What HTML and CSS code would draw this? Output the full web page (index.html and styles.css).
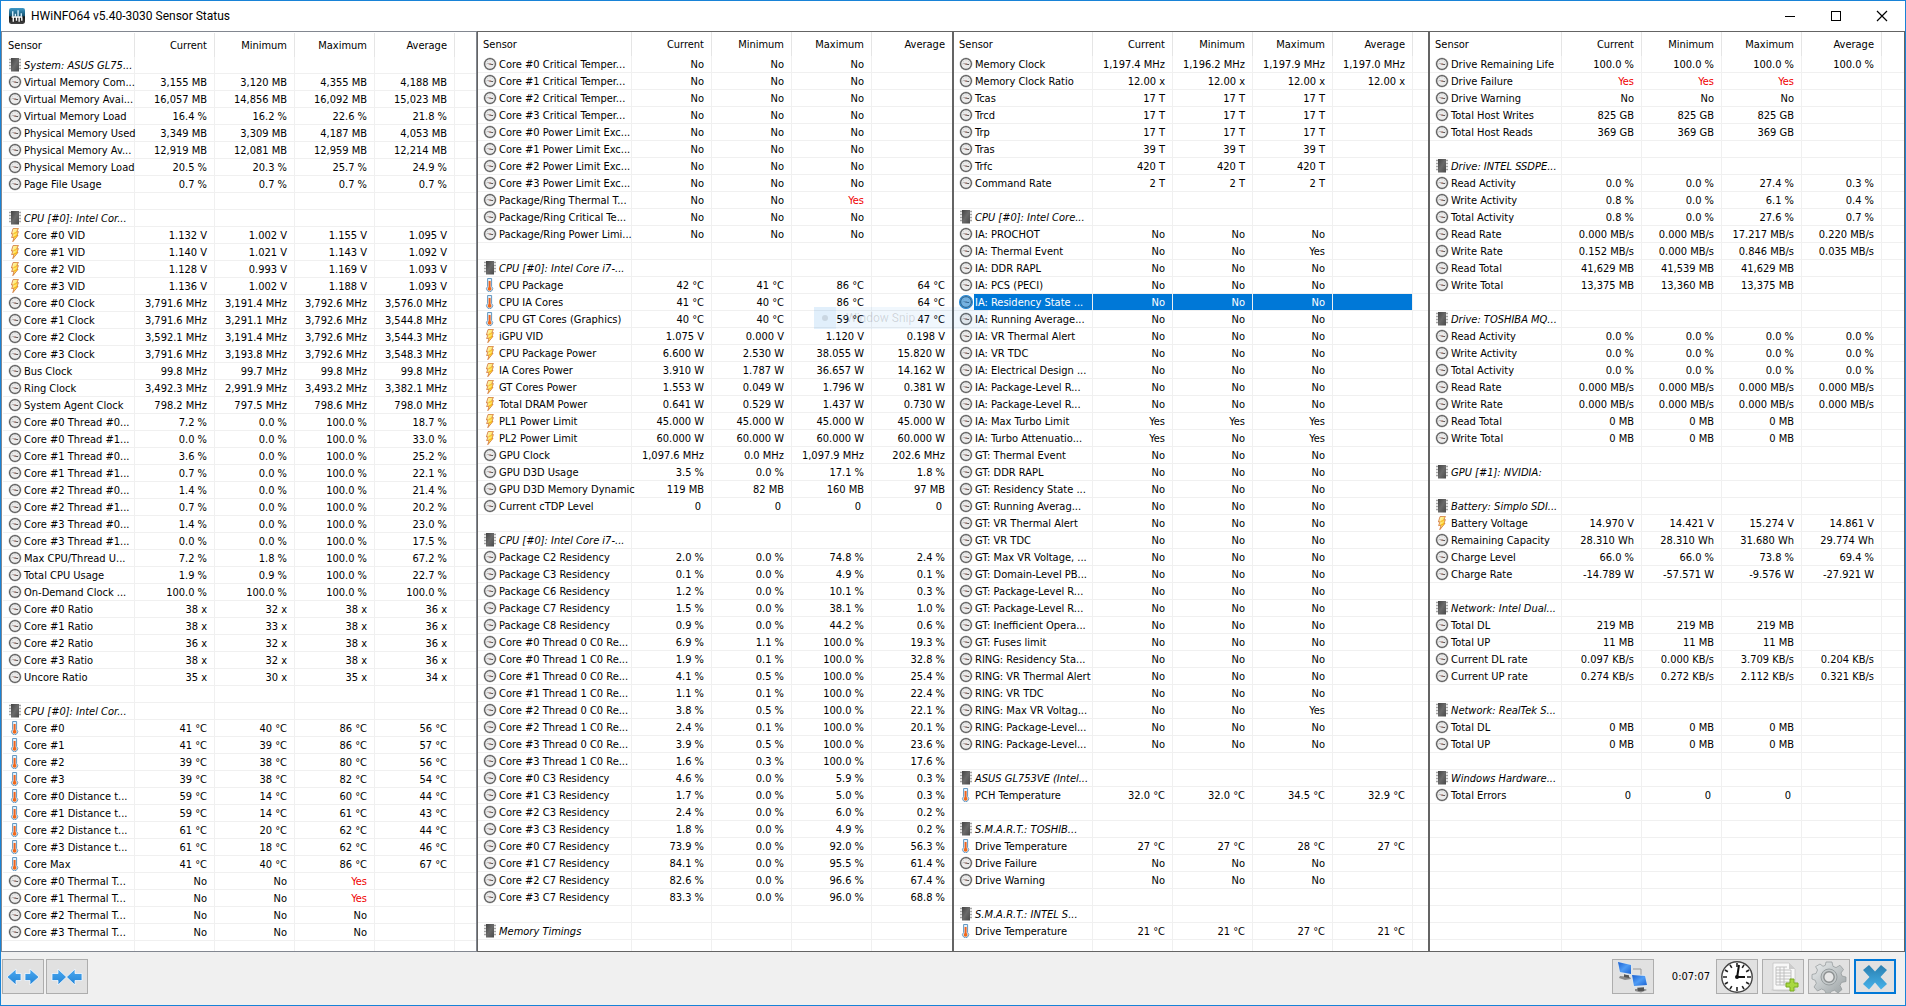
FILE: index.html
```html
<!DOCTYPE html>
<html lang="en">
<head>
<meta charset="utf-8">
<title>HWiNFO64 v5.40-3030 Sensor Status</title>
<link rel="stylesheet" href="styles.css">
</head>
<body>
<svg class="sprite" aria-hidden="true">
  <defs>
    <linearGradient id="chip-fill" x1="0" y1="0" x2="1" y2="1"><stop offset="0" stop-color="#444"/><stop offset=".5" stop-color="#6a6a6a"/><stop offset="1" stop-color="#4a4a4a"/></linearGradient>
    <linearGradient id="bolt-fill" x1="0" y1="0" x2="1" y2="1"><stop offset="0" stop-color="#fffbd0"/><stop offset="1" stop-color="#ffd200"/></linearGradient>
    <linearGradient id="arrow-fill" x1="0" y1="0" x2="0" y2="1"><stop offset="0" stop-color="#4aa8f0"/><stop offset="1" stop-color="#2384d6"/></linearGradient>
    <linearGradient id="screen-fill" x1="0" y1="0" x2="1" y2="1"><stop offset="0" stop-color="#1a5fd0"/><stop offset=".5" stop-color="#4f9cf5"/><stop offset="1" stop-color="#1c63d2"/></linearGradient>
    <linearGradient id="gear-fill" x1="0" y1="0" x2="1" y2="1"><stop offset="0" stop-color="#eceff0"/><stop offset="1" stop-color="#9aa1a3"/></linearGradient>
    <linearGradient id="cross-fill" x1="0" y1="0" x2="0" y2="1"><stop offset="0" stop-color="#2a7fb0"/><stop offset="1" stop-color="#45b2ea"/></linearGradient>
    <linearGradient id="logo-fill" x1="0" y1="0" x2="0" y2="1"><stop offset="0" stop-color="#3f9ac8"/><stop offset=".5" stop-color="#14506e"/><stop offset=".55" stop-color="#111"/><stop offset="1" stop-color="#444"/></linearGradient>
  </defs>
  <symbol id="gauge" viewBox="0 0 14 14">
    <circle cx="7" cy="7" r="6.5" fill="#c4c4c4"/>
    <circle cx="7" cy="7" r="5.4" fill="#ececec" stroke="#5a5a5a" stroke-width="1.2"/>
    <path d="M7 2.400v1M2.600 7h1M10.400 7h1M3.800 3.900l.6.6M10.200 3.900l-.6.6" stroke="#aaa" stroke-width=".8"/>
    <path d="M4.400 6.400 7 7.200" stroke="#999" stroke-width="1"/>
    <path d="M7 7.200 10 7.600" stroke="#555" stroke-width="1"/>
    <circle cx="7" cy="7.100" r=".8" fill="#b5786a"/>
  </symbol>
  <symbol id="chip" viewBox="0 0 14 14">
    <path d="M1 1.500h12M1 4.500h12M1 7.500h12M1 10.500h12" stroke="#a4a4a4" stroke-width="1.400"/>
    <rect x="3" y="0" width="8" height="13.500" fill="url(#chip-fill)"/>
  </symbol>
  <symbol id="bolt" viewBox="0 0 14 14">
    <path d="M5 .600 10.400 .300 8.800 3.800 10.400 3.600 9 7.400 10 7.400 4.800 13.700 6 9.200 3.600 9.600 5 5.800 3.400 6z" fill="url(#bolt-fill)" stroke="#d0743a" stroke-width=".8"/>
    <path d="M5.600 5.400 8.600 4.600M6.200 8.800l3-1.200" stroke="#f5a800" stroke-width=".9"/>
  </symbol>
  <symbol id="thermo" viewBox="0 0 14 14">
    <path d="M4.600 .500h4v8a3 3 0 1 1-4 0z" fill="#e4f1fb" stroke="#6398c2" stroke-width="1"/>
    <path d="M6.600 3v7" stroke="#f0641e" stroke-width="2"/>
    <circle cx="6.600" cy="10.800" r="1.900" fill="#f06a1c"/>
  </symbol>
</svg>

<div class="window">
  <header class="titlebar">
    <svg class="logo" viewBox="0 0 15 15" aria-hidden="true">
      <rect width="15" height="15" rx="2" fill="url(#logo-fill)"/>
      <path d="M3.500 3v5M6 5.500v2.500M8.500 2v6M11.500 5v3" stroke="#d4f0ff" stroke-width="1.300"/>
      <path d="M2.500 8.500h10M4 9v4M7 9v3M9.500 9v4M12 9v3" stroke="#fff" stroke-width="1.300"/>
    </svg>
    <h1 class="title">HWiNFO64 v5.40-3030 Sensor Status</h1>
    <button class="caption" type="button" aria-label="Minimize"><svg viewBox="0 0 12 12"><path d="M1 6.500h10" stroke="#000"/></svg></button>
    <button class="caption" type="button" aria-label="Maximize"><svg viewBox="0 0 12 12"><rect x="1.500" y="1.500" width="9" height="9" fill="none" stroke="#000"/></svg></button>
    <button class="caption" type="button" aria-label="Close"><svg viewBox="0 0 12 12"><path d="M1 1l10 10M11 1 1 11" stroke="#000" stroke-width="1.200"/></svg></button>
  </header>

  <main class="panes" id="panes">
    <div class="menu-ghost"><span class="menu-mark"></span>Window Snip</div>
  </main>

  <footer class="toolbar">
    <button class="tool" type="button" aria-label="Expand columns">
      <svg viewBox="0 0 36 30"><path d="M2 15l9-8v4.500h5v7h-5V23zM34 15l-9-8v4.500h-5v7h5V23z" fill="url(#arrow-fill)" stroke="#f4f9ff" stroke-width=".8"/></svg>
    </button>
    <button class="tool" type="button" aria-label="Shrink columns">
      <svg viewBox="0 0 36 30"><path d="M17.500 15 9 7v4.500H3v7h6V23zM17.500 15 26 7v4.500h7v7h-7V23z" fill="url(#arrow-fill)" stroke="#f4f9ff" stroke-width=".8"/></svg>
    </button>
    <span class="spacer"></span>
    <button class="tool" type="button" aria-label="Remote sensors">
      <svg viewBox="0 0 36 32">
        <path d="M18 8h8v8" fill="none" stroke="#999" stroke-width="1"/>
        <path d="M5 15l10 1 1 2-6 1-6-2z" fill="#8a8a8a"/><path d="M9 13l5 1v3l-5-1z" fill="#555"/>
        <path d="M2 0l15 3 0 12L4 12z" fill="#dfe5ea"/><path d="M3 1l13 3v9L5 11z" fill="url(#screen-fill)"/>
        <path d="M20 28h10l2 1-6 2.500-6-1.500z" fill="#8a8a8a"/><path d="M22 26h7v4h-6z" fill="#555"/>
        <path d="M16 13l15 1 2 12-15 1z" fill="#dfe5ea"/><path d="M17 14l13 1 2 9-13 1z" fill="url(#screen-fill)"/>
      </svg>
    </button>
    <time class="elapsed">0:07:07</time>
    <button class="tool" type="button" aria-label="Reset timer">
      <svg viewBox="0 0 36 32">
        <circle cx="18" cy="16" r="15.200" fill="#fff" stroke="#444" stroke-width="1.400"/>
        <g stroke="#222" stroke-width="1.600"><path d="M18 2v4M18 26v4M4 16h4M28 16h4"/><path d="M11 3.900l1.800 3M25 3.900l-1.800 3M5.900 9l3 1.800M30.100 9l-3 1.800M5.900 23l3-1.800M30.100 23l-3-1.800M11 28.100l1.800-3M25 28.100l-1.800-3"/></g>
        <path d="M18 17l2-13M17 16h9" stroke="#111" stroke-width="2" fill="none"/><circle cx="18" cy="16" r="2" fill="#111"/>
      </svg>
    </button>
    <button class="tool" type="button" aria-label="Start logging">
      <svg viewBox="0 0 36 30">
        <ellipse cx="19" cy="28" rx="13" ry="1.500" fill="#cfcfcf"/>
        <path d="M8 1h16l6 6v21H8z" fill="#f8f8f8" stroke="#c4c4c4" stroke-width=".8"/><path d="M24 1v6h6z" fill="#ccc"/>
        <path d="M11 5h11M11 8h15M11 11h15M11 14h15M11 17h15M11 20h15M11 23h12M11 5v18M15 5v18M19 5v18M26 8v12" stroke="#bcbcbc" stroke-width=".9"/>
        <path d="M25 17h4v4h4v4h-4v4h-4v-4h-4v-4h4z" fill="#a8d840" stroke="#78aa20"/>
      </svg>
    </button>
    <button class="tool" type="button" aria-label="Settings">
      <svg viewBox="0 0 36 32">
        <path d="M15 1h6l1 4.300 3 1.300 4-2.300 3.500 4.200-2.500 3.500 1 3 4 1v4.500l-4.500 1-1.500 3 2 4-4 3.500-3.500-2.700-3 1-1.500 2h-4l-1.500-3-3-1.300-4 2L3 26l2.300-3.600-1-3L1 18v-4.500l4-1L6.500 9 4.600 5.600 9 3l3 2.300 2.300-1z" fill="url(#gear-fill)" stroke="#909698" stroke-width=".7"/>
        <circle cx="18" cy="16" r="8" fill="#c4c9ca" stroke="#989ea0"/><circle cx="18" cy="16" r="5.200" fill="#e8e8e8" stroke="#8b8f90" stroke-width="1.400"/>
      </svg>
    </button>
    <button class="tool tool-default" type="button" aria-label="Close window">
      <svg viewBox="0 0 36 30"><path d="M12 3l6 6.500L24 3l6 5-6.500 7 6.500 7-6 5.500-6-7-6 7L6 22l6.500-7L6 8z" fill="url(#cross-fill)"/></svg>
    </button>
  </footer>
</div>
<script src="sensors.js"></script>
</body>
</html>
```
FILE: styles.css
```css
* { box-sizing: border-box; }

body {
  margin: 0;
  font-family: "DejaVu Sans Condensed", "Noto Sans", sans-serif;
  font-size: 11px;
  color: #000;
}

.sprite { position: absolute; width: 0; height: 0; }

.window {
  display: flex;
  flex-direction: column;
  height: 100vh;
  border: 1px solid #1883d7;
  background: #f0f0f0;
}

.titlebar {
  display: flex;
  align-items: center;
  flex: none;
  height: 30px;
  padding-left: 8px;
  background: #fff;
}
.logo { width: 16px; height: 16px; }
.title {
  flex: 1;
  margin: 0 0 0 6px;
  font: 12px Roboto, "Open Sans", sans-serif;
}
.caption {
  display: flex;
  align-items: center;
  justify-content: center;
  width: 46px;
  height: 30px;
  padding: 0;
  border: 0;
  background: none;
}
.caption svg { width: 12px; height: 12px; }

.panes {
  position: relative;
  display: grid;
  grid-template-columns: repeat(4, minmax(0, 1fr));
  flex: 1;
  min-height: 0;
}
.pane {
  overflow: hidden;
  border: 1px solid #646464;
  background: #fff;
}
.pane-inset { padding: 1px 0 0 1px; border-color: #828790; }

.sensors {
  width: 100%;
  table-layout: fixed;
  border-collapse: separate;
  border-spacing: 0;
}
.col-value { width: 80px; }

.sensors th, .sensors td {
  padding: 0 7px 0 0;
  border-right: 1px solid #f0f0f0;
  text-align: right;
  white-space: nowrap;
}
.sensors th { height: 24px; font-weight: normal; }
.sensors thead th { border-right-color: #e5e5e5; }
.sensors thead th:first-child { padding-left: 5px; text-align: left; }
.sensors tbody th, .sensors td {
  height: 17px;
  border-bottom: 1px solid #f0f0f0;
}
.sensors td { padding-top: 2px; line-height: 14px; }
.sensors tbody th { padding: 0; text-align: left; }
.sensors tr > :last-child { border-right: 0; }

.name { display: flex; align-items: center; height: 16px; }
.name svg { flex: none; width: 14px; height: 14px; margin: 0 1px 0 5px; }
.label {
  flex: 1;
  min-width: 0;
  height: 16px;
  padding: 2px 0 0 1px;
  line-height: 14px;
}
.group .label { font-style: italic; }

.selected .label, .selected td:not(:last-child) { background: #0078d7; color: #fff; }
.selected .name svg { border-radius: 50%; background: #0078d7; }
.selected .name use { opacity: 0.5; }
.sensors .alert { color: #f00000; }
.sensors .count { padding-right: 10px; }

.menu-ghost {
  position: absolute;
  left: 813px;
  top: 276px;
  display: flex;
  align-items: center;
  gap: 10px;
  width: 174px;
  height: 22px;
  background: rgba(0, 120, 215, 0.06);
  color: rgba(0, 0, 0, 0.15);
  font: 12px Roboto, "Open Sans", sans-serif;
}
.menu-mark {
  display: flex;
  align-items: center;
  justify-content: center;
  width: 22px;
  height: 22px;
  background: rgba(0, 120, 215, 0.06);
}
.menu-mark::before {
  content: "";
  width: 6px;
  height: 6px;
  border-radius: 50%;
  background: rgba(0, 0, 0, 0.1);
}

.toolbar {
  display: flex;
  align-items: center;
  flex: none;
  gap: 4px;
  height: 53px;
  padding: 0 9px 4px 1px;
}
.spacer { flex: 1; }
.tool {
  display: flex;
  align-items: center;
  justify-content: center;
  width: 42px;
  height: 35px;
  padding: 0;
  border: 1px solid #adadad;
  background: #e1e1e1;
}
.tool svg { width: 36px; height: 32px; }
.tool:first-child { margin-right: -2px; }
.tool-default { border: 2px solid #0078d7; }
.elapsed { padding: 0 2px 0 14px; }
```
FILE: sensors.js
```js
// Row format: kind|label|current|minimum|maximum|average
// kinds: c chip (group), g gauge, b bolt, t thermometer; an empty line is a blank row.
// "!" before a value marks an alert, "*" before the kind marks the selected row.
const no = (names, kind = "g") => names.map((n) => `${kind}|${n}|No|No|No|`).join("\n");

const panes = [
  { nameWidth: 132, inset: true, filler: true, rows: `c|System: ASUS GL75...
g|Virtual Memory Com...|3,155 MB|3,120 MB|4,355 MB|4,188 MB
g|Virtual Memory Avai...|16,057 MB|14,856 MB|16,092 MB|15,023 MB
g|Virtual Memory Load|16.4 %|16.2 %|22.6 %|21.8 %
g|Physical Memory Used|3,349 MB|3,309 MB|4,187 MB|4,053 MB
g|Physical Memory Av...|12,919 MB|12,081 MB|12,959 MB|12,214 MB
g|Physical Memory Load|20.5 %|20.3 %|25.7 %|24.9 %
g|Page File Usage|0.7 %|0.7 %|0.7 %|0.7 %

c|CPU [#0]: Intel Cor...
b|Core #0 VID|1.132 V|1.002 V|1.155 V|1.095 V
b|Core #1 VID|1.140 V|1.021 V|1.143 V|1.092 V
b|Core #2 VID|1.128 V|0.993 V|1.169 V|1.093 V
b|Core #3 VID|1.136 V|1.002 V|1.188 V|1.093 V
g|Core #0 Clock|3,791.6 MHz|3,191.4 MHz|3,792.6 MHz|3,576.0 MHz
g|Core #1 Clock|3,791.6 MHz|3,291.1 MHz|3,792.6 MHz|3,544.8 MHz
g|Core #2 Clock|3,592.1 MHz|3,191.4 MHz|3,792.6 MHz|3,544.3 MHz
g|Core #3 Clock|3,791.6 MHz|3,193.8 MHz|3,792.6 MHz|3,548.3 MHz
g|Bus Clock|99.8 MHz|99.7 MHz|99.8 MHz|99.8 MHz
g|Ring Clock|3,492.3 MHz|2,991.9 MHz|3,493.2 MHz|3,382.1 MHz
g|System Agent Clock|798.2 MHz|797.5 MHz|798.6 MHz|798.0 MHz
g|Core #0 Thread #0...|7.2 %|0.0 %|100.0 %|18.7 %
g|Core #0 Thread #1...|0.0 %|0.0 %|100.0 %|33.0 %
g|Core #1 Thread #0...|3.6 %|0.0 %|100.0 %|25.2 %
g|Core #1 Thread #1...|0.7 %|0.0 %|100.0 %|22.1 %
g|Core #2 Thread #0...|1.4 %|0.0 %|100.0 %|21.4 %
g|Core #2 Thread #1...|0.7 %|0.0 %|100.0 %|20.2 %
g|Core #3 Thread #0...|1.4 %|0.0 %|100.0 %|23.0 %
g|Core #3 Thread #1...|0.0 %|0.0 %|100.0 %|17.5 %
g|Max CPU/Thread U...|7.2 %|1.8 %|100.0 %|67.2 %
g|Total CPU Usage|1.9 %|0.9 %|100.0 %|22.7 %
g|On-Demand Clock ...|100.0 %|100.0 %|100.0 %|100.0 %
g|Core #0 Ratio|38 x|32 x|38 x|36 x
g|Core #1 Ratio|38 x|33 x|38 x|36 x
g|Core #2 Ratio|36 x|32 x|38 x|36 x
g|Core #3 Ratio|38 x|32 x|38 x|36 x
g|Uncore Ratio|35 x|30 x|35 x|34 x

c|CPU [#0]: Intel Cor...
t|Core #0|41 °C|40 °C|86 °C|56 °C
t|Core #1|41 °C|39 °C|86 °C|57 °C
t|Core #2|39 °C|38 °C|80 °C|56 °C
t|Core #3|39 °C|38 °C|82 °C|54 °C
t|Core #0 Distance t...|59 °C|14 °C|60 °C|44 °C
t|Core #1 Distance t...|59 °C|14 °C|61 °C|43 °C
t|Core #2 Distance t...|61 °C|20 °C|62 °C|44 °C
t|Core #3 Distance t...|61 °C|18 °C|62 °C|46 °C
t|Core Max|41 °C|40 °C|86 °C|67 °C
g|Core #0 Thermal T...|No|No|!Yes|
g|Core #1 Thermal T...|No|No|!Yes|
g|Core #2 Thermal T...|No|No|No|
g|Core #3 Thermal T...|No|No|No|` },

  { nameWidth: 154, filler: false, rows: no(["Core #0 Critical Temper...", "Core #1 Critical Temper...", "Core #2 Critical Temper...", "Core #3 Critical Temper...", "Core #0 Power Limit Exc...", "Core #1 Power Limit Exc...", "Core #2 Power Limit Exc...", "Core #3 Power Limit Exc..."]) + `
g|Package/Ring Thermal T...|No|No|!Yes|
g|Package/Ring Critical Te...|No|No|No|
g|Package/Ring Power Limi...|No|No|No|

c|CPU [#0]: Intel Core i7-...
t|CPU Package|42 °C|41 °C|86 °C|64 °C
t|CPU IA Cores|41 °C|40 °C|86 °C|64 °C
t|CPU GT Cores (Graphics)|40 °C|40 °C|59 °C|47 °C
b|iGPU VID|1.075 V|0.000 V|1.120 V|0.198 V
b|CPU Package Power|6.600 W|2.530 W|38.055 W|15.820 W
b|IA Cores Power|3.910 W|1.787 W|36.657 W|14.162 W
b|GT Cores Power|1.553 W|0.049 W|1.796 W|0.381 W
b|Total DRAM Power|0.641 W|0.529 W|1.437 W|0.730 W
b|PL1 Power Limit|45.000 W|45.000 W|45.000 W|45.000 W
b|PL2 Power Limit|60.000 W|60.000 W|60.000 W|60.000 W
g|GPU Clock|1,097.6 MHz|0.0 MHz|1,097.9 MHz|202.6 MHz
g|GPU D3D Usage|3.5 %|0.0 %|17.1 %|1.8 %
g|GPU D3D Memory Dynamic|119 MB|82 MB|160 MB|97 MB
g|Current cTDP Level|0|0|0|0

c|CPU [#0]: Intel Core i7-...
g|Package C2 Residency|2.0 %|0.0 %|74.8 %|2.4 %
g|Package C3 Residency|0.1 %|0.0 %|4.9 %|0.1 %
g|Package C6 Residency|1.2 %|0.0 %|10.1 %|0.3 %
g|Package C7 Residency|1.5 %|0.0 %|38.1 %|1.0 %
g|Package C8 Residency|0.9 %|0.0 %|44.2 %|0.6 %
g|Core #0 Thread 0 C0 Re...|6.9 %|1.1 %|100.0 %|19.3 %
g|Core #0 Thread 1 C0 Re...|1.9 %|0.1 %|100.0 %|32.8 %
g|Core #1 Thread 0 C0 Re...|4.1 %|0.5 %|100.0 %|25.4 %
g|Core #1 Thread 1 C0 Re...|1.1 %|0.1 %|100.0 %|22.4 %
g|Core #2 Thread 0 C0 Re...|3.8 %|0.5 %|100.0 %|22.1 %
g|Core #2 Thread 1 C0 Re...|2.4 %|0.1 %|100.0 %|20.1 %
g|Core #3 Thread 0 C0 Re...|3.9 %|0.5 %|100.0 %|23.6 %
g|Core #3 Thread 1 C0 Re...|1.6 %|0.3 %|100.0 %|17.6 %
g|Core #0 C3 Residency|4.6 %|0.0 %|5.9 %|0.3 %
g|Core #1 C3 Residency|1.7 %|0.0 %|5.0 %|0.3 %
g|Core #2 C3 Residency|2.4 %|0.0 %|6.0 %|0.2 %
g|Core #3 C3 Residency|1.8 %|0.0 %|4.9 %|0.2 %
g|Core #0 C7 Residency|73.9 %|0.0 %|92.0 %|56.3 %
g|Core #1 C7 Residency|84.1 %|0.0 %|95.5 %|61.4 %
g|Core #2 C7 Residency|82.6 %|0.0 %|96.6 %|67.4 %
g|Core #3 C7 Residency|83.3 %|0.0 %|96.0 %|68.8 %

c|Memory Timings` },

  { nameWidth: 139, filler: true, rows: `g|Memory Clock|1,197.4 MHz|1,196.2 MHz|1,197.9 MHz|1,197.0 MHz
g|Memory Clock Ratio|12.00 x|12.00 x|12.00 x|12.00 x
g|Tcas|17 T|17 T|17 T|
g|Trcd|17 T|17 T|17 T|
g|Trp|17 T|17 T|17 T|
g|Tras|39 T|39 T|39 T|
g|Trfc|420 T|420 T|420 T|
g|Command Rate|2 T|2 T|2 T|

c|CPU [#0]: Intel Core...
g|IA: PROCHOT|No|No|No|
g|IA: Thermal Event|No|No|Yes|
g|IA: DDR RAPL|No|No|No|
g|IA: PCS (PECI)|No|No|No|
*g|IA: Residency State ...|No|No|No|
` + no(["IA: Running Average...", "IA: VR Thermal Alert", "IA: VR TDC", "IA: Electrical Design ...", "IA: Package-Level R...", "IA: Package-Level R..."]) + `
g|IA: Max Turbo Limit|Yes|Yes|Yes|
g|IA: Turbo Attenuatio...|Yes|No|Yes|
` + no(["GT: Thermal Event", "GT: DDR RAPL", "GT: Residency State ...", "GT: Running Averag...", "GT: VR Thermal Alert", "GT: VR TDC", "GT: Max VR Voltage, ...", "GT: Domain-Level PB...", "GT: Package-Level R...", "GT: Package-Level R...", "GT: Inefficient Opera...", "GT: Fuses limit", "RING: Residency Sta...", "RING: VR Thermal Alert", "RING: VR TDC"]) + `
g|RING: Max VR Voltag...|No|No|Yes|
g|RING: Package-Level...|No|No|No|
g|RING: Package-Level...|No|No|No|

c|ASUS GL753VE (Intel...
t|PCH Temperature|32.0 °C|32.0 °C|34.5 °C|32.9 °C

c|S.M.A.R.T.: TOSHIB...
t|Drive Temperature|27 °C|27 °C|28 °C|27 °C
g|Drive Failure|No|No|No|
g|Drive Warning|No|No|No|

c|S.M.A.R.T.: INTEL S...
t|Drive Temperature|21 °C|21 °C|27 °C|21 °C` },

  { nameWidth: 132, filler: true, rows: `g|Drive Remaining Life|100.0 %|100.0 %|100.0 %|100.0 %
g|Drive Failure|!Yes|!Yes|!Yes|
g|Drive Warning|No|No|No|
g|Total Host Writes|825 GB|825 GB|825 GB|
g|Total Host Reads|369 GB|369 GB|369 GB|

c|Drive: INTEL SSDPE...
g|Read Activity|0.0 %|0.0 %|27.4 %|0.3 %
g|Write Activity|0.8 %|0.0 %|6.1 %|0.4 %
g|Total Activity|0.8 %|0.0 %|27.6 %|0.7 %
g|Read Rate|0.000 MB/s|0.000 MB/s|17.217 MB/s|0.220 MB/s
g|Write Rate|0.152 MB/s|0.000 MB/s|0.846 MB/s|0.035 MB/s
g|Read Total|41,629 MB|41,539 MB|41,629 MB|
g|Write Total|13,375 MB|13,360 MB|13,375 MB|

c|Drive: TOSHIBA MQ...
g|Read Activity|0.0 %|0.0 %|0.0 %|0.0 %
g|Write Activity|0.0 %|0.0 %|0.0 %|0.0 %
g|Total Activity|0.0 %|0.0 %|0.0 %|0.0 %
g|Read Rate|0.000 MB/s|0.000 MB/s|0.000 MB/s|0.000 MB/s
g|Write Rate|0.000 MB/s|0.000 MB/s|0.000 MB/s|0.000 MB/s
g|Read Total|0 MB|0 MB|0 MB|
g|Write Total|0 MB|0 MB|0 MB|

c|GPU [#1]: NVIDIA:

c|Battery: Simplo SDI...
b|Battery Voltage|14.970 V|14.421 V|15.274 V|14.861 V
g|Remaining Capacity|28.310 Wh|28.310 Wh|31.680 Wh|29.774 Wh
g|Charge Level|66.0 %|66.0 %|73.8 %|69.4 %
g|Charge Rate|-14.789 W|-57.571 W|-9.576 W|-27.921 W

c|Network: Intel Dual...
g|Total DL|219 MB|219 MB|219 MB|
g|Total UP|11 MB|11 MB|11 MB|
g|Current DL rate|0.097 KB/s|0.000 KB/s|3.709 KB/s|0.204 KB/s
g|Current UP rate|0.274 KB/s|0.272 KB/s|2.112 KB/s|0.321 KB/s

c|Network: RealTek S...
g|Total DL|0 MB|0 MB|0 MB|
g|Total UP|0 MB|0 MB|0 MB|

c|Windows Hardware...
g|Total Errors|0|0|0|` },
];

const icons = { c: "chip", g: "gauge", b: "bolt", t: "thermo" };
const ROWS = 53;

function rowHtml(line, filler) {
  const end = filler ? "<td></td>" : "";
  if (!line) return `<tr><td></td><td></td><td></td><td></td><td></td>${end}</tr>`;
  const selected = line[0] === "*";
  const [kind, label, ...values] = line.replace("*", "").split("|");
  const cells = [0, 1, 2, 3].map((i) => {
    const value = values[i] || "";
    if (value[0] === "!") return `<td class="alert">${value.slice(1)}</td>`;
    return value === "0" ? `<td class="count">0</td>` : `<td>${value}</td>`;
  });
  const cls = selected ? "selected" : kind === "c" ? "group" : "";
  return `<tr class="${cls}"><th scope="row"><div class="name"><svg aria-hidden="true"><use href="#${icons[kind]}"/></svg><span class="label">${label}</span></div></th>${cells.join("")}${end}</tr>`;
}

const ghost = document.querySelector(".menu-ghost");
for (const pane of panes) {
  const lines = pane.rows.split("\n");
  while (lines.length < ROWS) lines.push("");
  const section = document.createElement("section");
  section.className = pane.inset ? "pane pane-inset" : "pane";
  const heads = ["Sensor", "Current", "Minimum", "Maximum", "Average"].map((h) => `<th scope="col">${h}</th>`).join("");
  const valueCols = '<col class="col-value">'.repeat(4);
  section.innerHTML = `<table class="sensors"><colgroup><col style="width:${pane.nameWidth}px">${valueCols}${pane.filler ? "<col>" : ""}</colgroup>
    <thead><tr>${heads}${pane.filler ? "<th></th>" : ""}</tr></thead>
    <tbody>${lines.map((l) => rowHtml(l, pane.filler)).join("")}</tbody></table>`;
  ghost.before(section);
}
```
